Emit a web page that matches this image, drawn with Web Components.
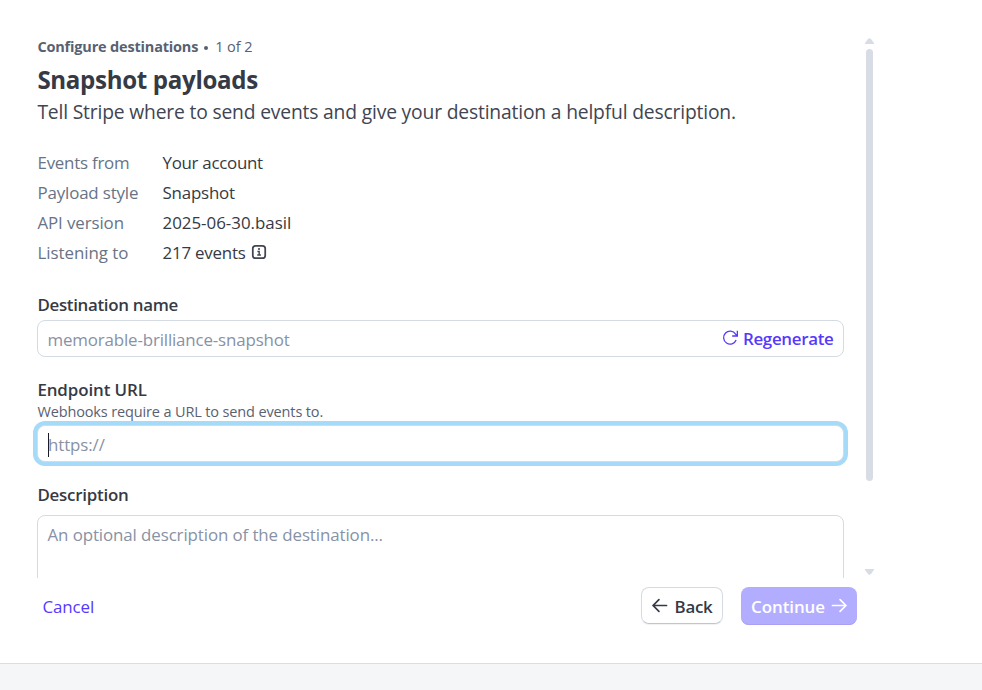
<!DOCTYPE html>
<html lang="en">
<head>
<meta charset="utf-8">
<title>Configure destinations</title>
<style>
  html, body { margin: 0; height: 100%; overflow: hidden; background: #fff; }
  body { font-family: "Open Sans", "Noto Sans", sans-serif; font-size: 16.9px; color: #353a44; }
</style>
</head>
<body>
<wizard-page>
  <scroll-pane>
    <step-header step="Configure destinations" count="1 of 2" heading="Snapshot payloads">Tell Stripe where to send events and give your destination a helpful description.</step-header>
    <summary-list>
      <summary-row label="Events from" style="--label-ls:-.24px;--value-ls:-.28px">Your account</summary-row>
      <summary-row label="Payload style" style="--label-ls:-.16px;--value-ls:-.2px">Snapshot</summary-row>
      <summary-row label="API version" style="--label-ls:-.11px;--value-ls:-.01px">2025-06-30.basil</summary-row>
      <summary-row label="Listening to" style="--label-ls:-.05px;--value-ls:-.212px">217 events<ui-icon slot="icon" name="info" style="--size:14px"></ui-icon></summary-row>
    </summary-list>
    <form-field label="Destination name" style="--label-ls:-.31px;--value-ls:-.15px">
      memorable-brilliance-snapshot
      <link-action slot="action">Regenerate</link-action>
    </form-field>
    <form-field label="Endpoint URL" hint="Webhooks require a URL to send events to." focused style="--label-ls:-.1px;--value-ls:-.1px">https://</form-field>
    <form-field label="Description" multiline style="--label-ls:-.234px;--value-ls:-.1px">An optional description of the destination...</form-field>
  </scroll-pane>
  <wizard-footer slot="footer">
    <ui-button kind="plain">Cancel</ui-button>
    <ui-button slot="end" kind="outline" style="letter-spacing:-.3px"><ui-icon name="left"></ui-icon>Back</ui-button>
    <ui-button slot="end" kind="primary" style="letter-spacing:-.06px">Continue<ui-icon name="right"></ui-icon></ui-button>
  </wizard-footer>
</wizard-page>

<script>
class Base extends HTMLElement {
  connectedCallback() {
    if (!this.shadowRoot) this.attachShadow({ mode: 'open' }).innerHTML = this.view();
  }
  attr(name) { return this.getAttribute(name) || ''; }
}

customElements.define('ui-icon', class extends Base {
  view() {
    const shapes = {
      info: '<rect x=".9" y=".9" width="14.2" height="14.2" rx="3.2" stroke-width="2"/><path d="M6.2 7.4h2v4M6 11.5h4.2" stroke-width="1.6"/><circle cx="8" cy="4.5" r="1.2" fill="currentColor" stroke="none"/>',
      refresh: '<path d="M14 10.6A6.9 6.9 0 1 1 13.4 4.4L15.2 6.2M15.3 .8v5.6H9.8" stroke-width="1.4"/>',
      left: '<path d="M15.5 8H1.4M7.4 1.8 1.2 8l6.2 6.2" stroke-width="1.8" stroke-linecap="round"/>',
      right: '<path d="M.5 8h14.1M8.6 1.8 14.8 8l-6.2 6.2" stroke-width="1.8" stroke-linecap="round"/>'
    };
    return `<style>
      :host { display: block; flex: none; width: var(--size, 15px); height: var(--size, 15px); }
      svg { display: block; width: 100%; height: 100%; overflow: visible; }
    </style><svg viewBox="0 0 16 16" fill="none" stroke="currentColor">${shapes[this.attr('name')]}</svg>`;
  }
});

customElements.define('wizard-page', class extends Base {
  view() {
    return `<style>
      :host { display: flex; flex-direction: column; height: 690px; }
      .strip { height: 26px; border-top: 1px solid #d8dee4; background: #f5f6f8; }
    </style><slot></slot><slot name="footer"></slot><div class="strip"></div>`;
  }
});

customElements.define('scroll-pane', class extends Base {
  view() {
    return `<style>
      :host { display: flex; height: 578px; overflow: hidden; }
      main { width: 807px; padding: 37px 21px 0 37px; }
      .bar { width: 9px; height: 537px; margin-top: 38px; display: flex; flex-direction: column; align-items: center; }
      .thumb { width: 7px; height: 432px; margin: 5px 0 auto; border-radius: 4px; background: #d8dde5; }
      svg { display: block; width: 9px; height: 6px; fill: #d8dde5; }
    </style>
    <main><slot></slot></main>
    <div class="bar">
      <svg viewBox="0 0 9 6"><path d="M0 6V5L3 1Q4.5-.6 6 1L9 5v1z"/></svg>
      <div class="thumb"></div>
      <svg viewBox="0 0 9 6"><path d="M0 0v1L3 5Q4.5 6.6 6 5L9 1V0z"/></svg>
    </div>`;
  }
});

customElements.define('step-header', class extends Base {
  view() {
    return `<style>
      :host { display: block; padding-left: .4px; white-space: nowrap; }
      .step { display: flex; font-size: 14.5px; line-height: 20px; color: #596171; }
      b { letter-spacing: -.18px; }
      .dot { width: 4px; height: 4px; margin: 9px 7px 0 6px; border-radius: 50%; background: #596171; }
      .count { letter-spacing: -.106px; }
      h1 { margin: 7px 0 0; font-size: 24.1px; line-height: 32px; letter-spacing: -.32px; }
      p { margin: 0; font-size: 19.3px; line-height: 31px; letter-spacing: -.18px; color: #414552; }
    </style>
    <div class="step"><b>${this.attr('step')}</b><span class="dot"></span><span class="count">${this.attr('count')}</span></div>
    <h1>${this.attr('heading')}</h1>
    <p><slot></slot></p>`;
  }
});

customElements.define('summary-list', class extends Base {
  view() {
    return `<style>:host { display: grid; grid-auto-rows: 30px; margin: 21px 0 25px; padding-left: .5px; }</style><slot></slot>`;
  }
});

customElements.define('summary-row', class extends Base {
  view() {
    return `<style>
      :host { display: grid; grid-template-columns: 125px auto; line-height: 30px; white-space: nowrap; }
      .label { color: #687385; letter-spacing: var(--label-ls); }
      .value { display: flex; align-items: center; gap: 6px; letter-spacing: var(--value-ls); }
      ::slotted(ui-icon) { margin-top: -3px; color: #414552; }
    </style><span class="label">${this.attr('label')}</span><span class="value"><span><slot></slot></span><slot name="icon"></slot></span>`;
  }
});

customElements.define('form-field', class extends Base {
  view() {
    const hint = this.attr('hint');
    return `<style>
      :host { display: block; margin-bottom: 21px; white-space: nowrap; }
      label { display: block; padding-left: .4px; font-weight: 600; line-height: 24px; letter-spacing: var(--label-ls); }
      .hint { padding-left: .4px; font-size: 14.5px; line-height: 20px; letter-spacing: -.135px; color: #596171; }
      .box { box-sizing: border-box; display: flex; align-items: center; justify-content: space-between; height: 37px; margin-top: 3px; padding: 3px 9.5px 0; border: 1px solid #d5dbe3; border-radius: 8px; background: #fff; line-height: 24px; color: #8792a5; letter-spacing: var(--value-ls, 0); }
      :host([focused]) .box { box-shadow: 0 0 0 4px #a5daf8; padding-left: 10px; }
      :host([focused]) .text { box-shadow: inset 1px 0 #1a1b25; }
      :host([multiline]) .box { align-items: flex-start; height: 92px; margin-top: 8px; padding-top: 7px; }
    </style>
    <label>${this.attr('label')}</label>
    ${hint ? `<div class="hint">${hint}</div>` : ''}
    <div class="box"><span class="text"><slot></slot></span><slot name="action"></slot></div>`;
  }
});

customElements.define('link-action', class extends Base {
  view() {
    return `<style>
      :host { display: flex; align-items: center; gap: 5px; margin-top: -2px; color: #533afd; font-weight: 600; letter-spacing: -.3px; }
      ui-icon { margin-top: -4px; }
    </style><ui-icon name="refresh"></ui-icon><span><slot></slot></span>`;
  }
});

customElements.define('wizard-footer', class extends Base {
  view() {
    return `<style>
      :host { box-sizing: border-box; display: flex; justify-content: space-between; align-items: flex-start; width: 857px; height: 85px; padding: 9px 0 0 42.4px; }
      .end { display: flex; gap: 18px; }
    </style><slot></slot><div class="end"><slot name="end"></slot></div>`;
  }
});

customElements.define('ui-button', class extends Base {
  view() {
    return `<style>
      :host { box-sizing: border-box; display: flex; align-items: center; justify-content: center; height: 37px; line-height: 24px; border-radius: 8px; font-weight: 600; white-space: nowrap; }
      :host([kind=plain]) { height: 38px; padding-top: 1px; color: #533afd; font-weight: 400; letter-spacing: -.08px; }
      :host([kind=outline]) { width: 82px; gap: 8px; border: 1px solid #d5dbe3; border-bottom-color: #c0c6cf; padding-top: 3px; box-shadow: 0 1px 1px rgba(0,0,0,.06); }
      :host([kind=primary]) { width: 116px; height: 38px; margin-top: -.5px; gap: 7px; padding-top: 2px; color: #fff; background: #b3adff; box-shadow: inset 0 -1px #a8a1f2; }
      ::slotted(ui-icon) { margin-top: -3px; }
    </style><slot></slot>`;
  }
});
</script>
</body>
</html>
